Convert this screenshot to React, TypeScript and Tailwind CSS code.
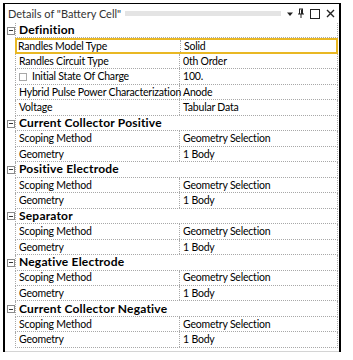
import React from "react";

// Detail-Ansicht "Battery Cell": Gruppen mit Eigenschaftszeilen, eine Zeile hervorgehoben.

type Row =
  | { kind: "group"; label: string }
  | { kind: "prop"; label: string; value: string; check?: boolean; active?: boolean };

const ROWS: Row[] = [
  { kind: "group", label: "Definition" },
  { kind: "prop", label: "Randles Model Type", value: "Solid", active: true },
  { kind: "prop", label: "Randles Circuit Type", value: "0th Order" },
  { kind: "prop", label: "Initial State Of Charge", value: "100.", check: true },
  { kind: "prop", label: "Hybrid Pulse Power Characterization", value: "Anode" },
  { kind: "prop", label: "Voltage", value: "Tabular Data" },
  { kind: "group", label: "Current Collector Positive" },
  { kind: "prop", label: "Scoping Method", value: "Geometry Selection" },
  { kind: "prop", label: "Geometry", value: "1 Body" },
  { kind: "group", label: "Positive Electrode" },
  { kind: "prop", label: "Scoping Method", value: "Geometry Selection" },
  { kind: "prop", label: "Geometry", value: "1 Body" },
  { kind: "group", label: "Separator" },
  { kind: "prop", label: "Scoping Method", value: "Geometry Selection" },
  { kind: "prop", label: "Geometry", value: "1 Body" },
  { kind: "group", label: "Negative Electrode" },
  { kind: "prop", label: "Scoping Method", value: "Geometry Selection" },
  { kind: "prop", label: "Geometry", value: "1 Body" },
  { kind: "group", label: "Current Collector Negative" },
  { kind: "prop", label: "Scoping Method", value: "Geometry Selection" },
  { kind: "prop", label: "Geometry", value: "1 Body" },
];

function Minus() {
  return (
    <span className="flex h-[8px] w-[8px] items-center justify-center border border-[#8a8a8a] bg-white">
      <span className="h-px w-[4px] bg-[#333]" />
    </span>
  );
}

function TitleIcons() {
  return (
    <div className="flex items-center pr-[4px]">
      <svg width="8" height="8" viewBox="0 0 8 8">
        <path d="M1 2.5h6L4 6z" fill="#222" />
      </svg>
      <svg className="ml-[3px]" width="8" height="11" viewBox="0 0 8 11">
        <path d="M2 1h4M2.5 1v5M5.5 1v5M1 6h6M4 6v4" stroke="#222" strokeWidth="1" fill="none" />
        <path d="M4.5 1.5v4.5" stroke="#222" strokeWidth="1" fill="none" />
      </svg>
      <svg className="ml-[5px]" width="10" height="10" viewBox="0 0 10 10">
        <rect x="0.5" y="0.5" width="9" height="9" stroke="#222" fill="none" />
      </svg>
      <svg className="ml-[6px]" width="9" height="9" viewBox="0 0 9 9">
        <path d="M1 1l7 7M8 1L1 8" stroke="#222" strokeWidth="1.4" />
      </svg>
    </div>
  );
}

export default function App() {
  return (
    <div className="h-[360px] w-[353px] bg-white pl-[3px] pt-[3px] font-['Lato','Noto_Sans',sans-serif] text-[10.5px] leading-none tracking-[-0.2px] text-black">
      <div className="flex h-[349px] w-[338px] flex-col border-x-2 border-t border-black">
        <div className="flex h-[19px] shrink-0 items-center pl-[3px] text-[11px] tracking-normal text-[#333]">
          <span className="whitespace-nowrap">Details of "Battery Cell"</span>
          <div className="ml-[4px] mr-[5px] h-[5px] flex-1 bg-[radial-gradient(#c4c4c4_0.6px,transparent_0.8px)] bg-[length:2px_2px]" />
          <TitleIcons />
        </div>
        <div className="flex flex-col pr-px">
          {ROWS.map((r, i) =>
            r.kind === "group" ? (
              <div key={i} className="flex h-[15.476px]">
                <div className="flex w-[10px] shrink-0 items-center justify-center pl-px">
                  <Minus />
                </div>
                <div className="flex flex-1 items-center whitespace-nowrap border-b border-l border-r border-dotted border-[#a8a8a8] pl-[3px] text-[12px] font-bold tracking-[0.2px]">
                  {r.label}
                </div>
              </div>
            ) : (
              <div key={i} className="flex h-[15.476px]">
                <div className="w-[10px] shrink-0" />
                <div
                  className={
                    r.active
                      ? "flex flex-1 border-2 border-[#e9b824]"
                      : "flex flex-1 border-b border-l border-r border-dotted border-[#a8a8a8]"
                  }
                >
                  <div
                    className={
                      "flex w-[164px] shrink-0 items-center gap-[5px] whitespace-nowrap border-r border-dotted border-[#a8a8a8] " +
                      (r.active ? "pl-[1px]" : "pl-[3px]")
                    }
                  >
                    {r.check && <span className="h-[8px] w-[8px] border border-[#a8a8a8] bg-white" />}
                    {r.label}
                  </div>
                  <div className="flex flex-1 items-center whitespace-nowrap pl-[3px]">{r.value}</div>
                </div>
              </div>
            )
          )}
        </div>
        <div className="mt-auto h-px bg-[#d4d4d4]" />
      </div>
    </div>
  );
}
